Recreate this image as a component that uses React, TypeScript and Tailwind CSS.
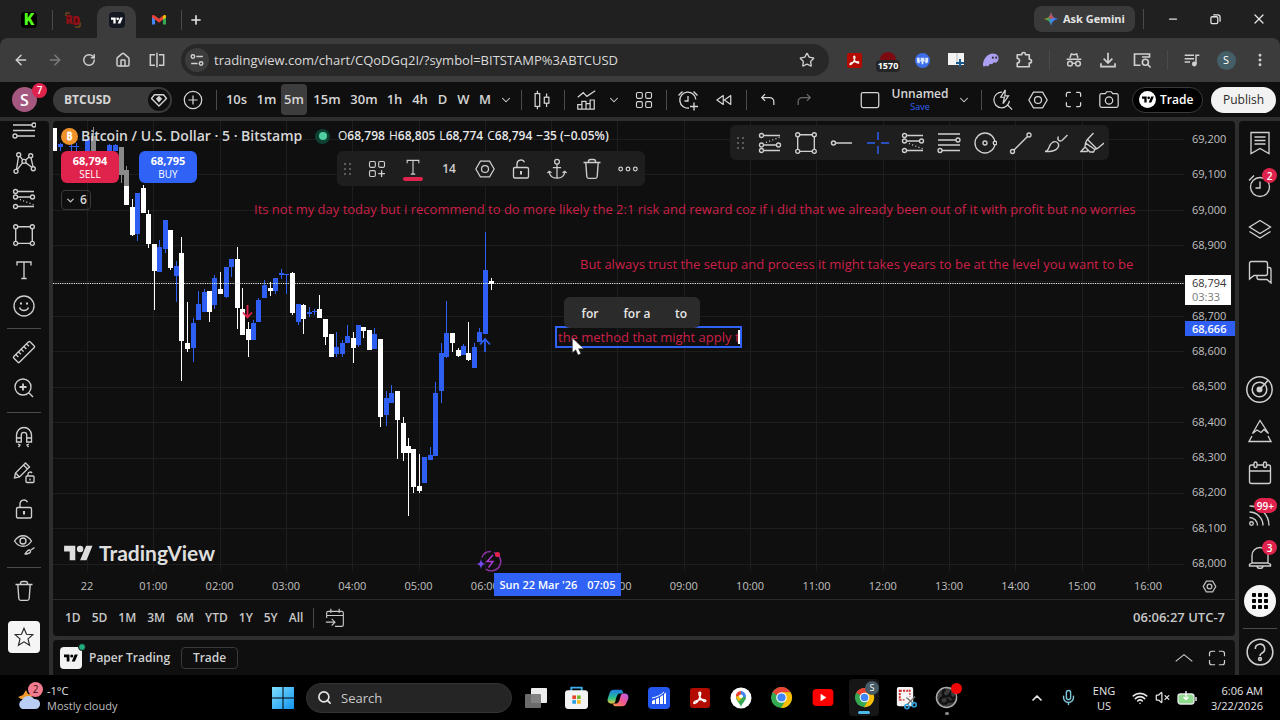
import { useState } from "react";
import type { ReactNode } from "react";
import {
  ArrowLeft, ArrowRight, RotateCw, House, Plus, Star, Minus, X, ChevronDown, ChevronUp,
  EllipsisVertical, Search, Wifi, Mic, Maximize, VolumeX,
} from "lucide-react";

const UI = "font-['Open_Sans','Noto_Sans',sans-serif]";

type IconProps = { children: ReactNode; className?: string; sw?: number };

function Ic({ children, className = "size-6", sw = 1.35 }: IconProps) {
  return (
    <svg viewBox="0 0 24 24" className={`shrink-0 ${className}`} fill="none" stroke="currentColor" strokeWidth={sw} aria-hidden="true">
      {children}
    </svg>
  );
}

function Btn({ label, className = "w-9", children }: { label: string; className?: string; children: ReactNode }) {
  return (
    <button type="button" aria-label={label} className={`flex shrink-0 items-center justify-center ${className}`}>
      {children}
    </button>
  );
}

function Sep({ className = "w-3" }: { className?: string }) {
  return (
    <span className={`flex shrink-0 justify-center ${className}`}>
      <span className="h-5 w-px bg-[#4a4a4a]" />
    </span>
  );
}

const TvMark = ({ className }: { className: string }) => (
  <svg viewBox="0 0 36 20" className={className} fill="currentColor" aria-hidden="true">
    <path d="M14 19H7V8H0V1h14v18zM28 19h-8l7.5-18h8L28 19z" />
    <circle cx="20" cy="5" r="4" />
  </svg>
);

const FibIcon = () => (
  <Ic>
    <circle cx="3.5" cy="4.5" r="2" /><circle cx="3.5" cy="10" r="2" /><circle cx="20.5" cy="10" r="2" /><circle cx="3.5" cy="19.5" r="2" />
    <path d="M5.5 4.5H22M5.5 10h13M5.5 19.5H22" />
    <path d="M8 12.5l14 5.5" strokeDasharray="1 2.4" />
  </Ic>
);
const RectIcon = () => (
  <Ic>
    <circle cx="3.7" cy="3.7" r="2" /><circle cx="20.3" cy="3.7" r="2" /><circle cx="3.7" cy="20.3" r="2" /><circle cx="20.3" cy="20.3" r="2" />
    <path d="M5.7 3.7h12.6M5.7 20.3h12.6M3.7 5.7v12.6M20.3 5.7v12.6" />
  </Ic>
);
const TextIcon = ({ className }: { className?: string }) => (
  <Ic className={className}><path d="M5 7.5V4h14v3.5M12 4v16.5M9.3 20.5h5.4" /></Ic>
);
const LockIcon = () => (
  <Ic>
    <rect x="4.5" y="10.5" width="15" height="10.5" rx="1.5" />
    <path d="M8 10.5V7a4 4 0 0 1 7.6-1.7" /><path d="M12 14v3.5" strokeWidth="2" />
  </Ic>
);
const TrashIcon = () => (
  <Ic><path d="M3.5 5.5h17M5.8 5.5l1 14a2 2 0 0 0 2 1.8h6.4a2 2 0 0 0 2-1.8l1-14M8.5 5.5v-1a2 2 0 0 1 2-2h3a2 2 0 0 1 2 2v1" /></Ic>
);
const HexIcon = ({ className, sw }: { className?: string; sw?: number }) => (
  <Ic className={className} sw={sw}><path d="M7 3.5h10l5 8.5-5 8.5H7L2 12z" /><circle cx="12" cy="12" r="3.8" /></Ic>
);
const Grip = ({ className = "w-5" }: { className?: string }) => (
  <span className={`flex shrink-0 items-center justify-center text-[#5c5c5c] ${className}`}>
    <svg viewBox="0 0 8 12" className="h-3 w-2" fill="currentColor" aria-hidden="true">
      {[0, 5, 10].map((y) => (
        <g key={y}><rect x="0" y={y} width="2" height="2" /><rect x="5" y={y} width="2" height="2" /></g>
      ))}
    </svg>
  </span>
);
const AcrobatIcon = ({ className }: { className: string }) => (
  <svg viewBox="0 0 20 20" className={className} aria-hidden="true">
    <rect width="20" height="20" rx="3" fill="#b30b00" />
    <path d="M9 4.500c1.500-1 2 .5 1.500 2.500C9.500 10.500 7 15 4.500 15.500c-1.500 0-.5-2 2-2.800 3-1 6.500-1.500 8.500-.9 1.800.7.500 2.200-1.200 1.500C11 12 8.500 7.500 9 4.500z" fill="none" stroke="#fff" strokeWidth="1.400" />
  </svg>
);
const ChromeIcon = ({ className }: { className: string }) => (
  <svg viewBox="0 0 24 24" className={className} aria-hidden="true">
    <circle cx="12" cy="12" r="11" fill="#34a853" />
    <path d="M12 12 2.500 6.500A11 11 0 0 1 21.500 6.500L12 7z" fill="#ea4335" />
    <path d="M21.500 6.500A11 11 0 0 1 11.500 23L16.500 14.500 12 6.500z" fill="#fbbc04" />
    <circle cx="12" cy="12" r="5.500" fill="#fff" /><circle cx="12" cy="12" r="4.300" fill="#4285f4" />
  </svg>
);

function BrowserTabs() {
  return (
    <header className="flex h-[38px] items-end bg-[#202020] text-[#e3e3e3]">
      <nav aria-label="Tabs" className="flex h-8 shrink-0 items-center">
        <Btn label="Kick" className="ml-3 w-[34px] pb-1">
          <span className="flex size-4 items-center justify-center rounded-sm bg-black font-['Roboto',sans-serif] text-base leading-4 font-black text-[#53fc18]">K</span>
        </Btn>
        <Sep className="w-3 pb-1" />
        <Btn label="Game" className="w-[30px] pb-1">
          <svg viewBox="0 0 16 16" className="size-4" aria-hidden="true">
            <path d="M1 4V1h4M15 10v5h-5" stroke="#8a5a20" fill="none" />
            <path d="M1.500 3h4.500l1.500 2-.5 2.500L8 12H5.500l-1-3-.5 3h-2.500zM8.500 4H13l2 2v5l-2 2H8.500z" fill="#8d1016" /><path d="M11.500 6.500v4M4 5v2" stroke="#3a0508" strokeWidth="1.500" />
          </svg>
        </Btn>
        <span className="w-[9px]" />
        <button type="button" aria-label="TradingView" className="flex h-8 w-[39px] items-center justify-center rounded-t-[10px] bg-[#3c3c3c] pb-1">
          <span className="flex size-4 items-center justify-center rounded-sm bg-[#131722] text-white"><TvMark className="h-[7px] w-3" /></span>
        </button>
        <Btn label="Gmail" className="w-[46px] pb-1">
          <svg viewBox="0 0 16 12" className="h-3 w-[14px]" aria-hidden="true">
            <path d="M0 2v9h3.500V4z" fill="#4285f4" /><path d="M12.500 4v7H16V2z" fill="#34a853" />
            <path d="M0 2C0 0 2 0 3.500 1L8 4.500 12.500 1v4.500L8 9 3.500 5.500 0 3z" fill="#ea4335" /><path d="M12.500 1C14 0 16 0 16 2v1l-3.500 2.500z" fill="#fbbc04" />
          </svg>
        </Btn>
        <Sep className="-ml-1 w-1.5 pb-1" />
        <Btn label="New tab" className="w-6 pb-1"><Plus className="size-[14px]" strokeWidth={2.8} /></Btn>
      </nav>
      <div className="flex-1" />
      <div className="flex h-[38px] items-center">
        <button type="button" className={`flex h-[26px] w-[101px] items-center justify-center gap-[5px] rounded-lg bg-[#3a3a3a] text-[11px] font-bold ${UI}`}>
          <svg viewBox="0 0 24 24" className="size-[14px]" aria-hidden="true">
            <defs>
              <linearGradient id="gem" x1="0" y1="0" x2="1" y2="0">
                <stop offset="0" stopColor="#f4b400" /><stop offset=".3" stopColor="#34a853" /><stop offset=".55" stopColor="#4285f4" /><stop offset="1" stopColor="#3b7bff" />
              </linearGradient>
            </defs>
            <path d="M12 0c1 7 5 11 12 12-7 1-11 5-12 12C11 17 7 13 0 12 7 11 11 7 12 0z" fill="url(#gem)" />
            <path d="M12 0c.8 5 3 8.500 6 10.300L12 12 6.500 10C10 8 11.300 5 12 0z" fill="#ea4335" opacity=".75" />
          </svg>
          Ask Gemini
        </button>
        <Sep className="w-4" />
        <Btn label="Minimize" className="w-[43px]"><Minus className="size-3" strokeWidth={2.5} /></Btn>
        <Btn label="Restore" className="w-[43px]">
          <Ic className="size-[11px]" sw={2.8}><rect x="2" y="6" width="15" height="15" rx="3" /><path d="M7 2h10a5 5 0 0 1 5 5v10" /></Ic>
        </Btn>
        <Btn label="Close" className="w-[43px]"><X className="size-4" strokeWidth={1.8} /></Btn>
      </div>
    </header>
  );
}

function BrowserBar() {
  const [url, setUrl] = useState("tradingview.com/chart/CQoDGq2I/?symbol=BITSTAMP%3ABTCUSD");
  const b = "h-8 w-[34px]";
  return (
    <div className="bg-[#202020]">
      <div className="flex h-11 items-center rounded-t-lg bg-[#3c3c3c] pr-[3px] pl-1 text-[#d0d0d0]">
        <Btn label="Back" className={b}><ArrowLeft className="size-4" strokeWidth={2.2} /></Btn>
        <Btn label="Forward" className={`${b} text-[#7c7c7c]`}><ArrowRight className="size-4" strokeWidth={2.2} /></Btn>
        <Btn label="Reload" className={b}><RotateCw className="size-[14px]" strokeWidth={2.5} /></Btn>
        <Btn label="Home" className={b}><House className="size-4" strokeWidth={2.2} /></Btn>
        <Btn label="Split view" className={b}>
          <Ic className="size-4" sw={2.2}><path d="M9 4H2v16h7M12 1v22M15 4h7v16h-7" /></Ic>
        </Btn>
        <div className="mr-2 ml-[7px] flex h-8 flex-1 items-center rounded-full bg-[#282828] pr-[5px] pl-1">
          <Btn label="Site information" className="size-6 rounded-full bg-[#3c3c3c]">
            <Ic className="size-[14px]" sw={2.4}><circle cx="5" cy="6" r="3" /><path d="M11 6h11M2 18h11" /><circle cx="19" cy="18" r="3" /></Ic>
          </Btn>
          <label htmlFor="url" className="sr-only">Address</label>
          <input id="url" value={url} onChange={(e) => setUrl(e.target.value)} className={`ml-1 h-6 min-w-0 flex-1 bg-transparent pl-px text-[13px] text-[#dadada] outline-none ${UI}`} />
          <Btn label="Bookmark" className="w-[34px]"><Star className="size-4" strokeWidth={2} /></Btn>
        </div>
        <Btn label="Acrobat" className={b}><AcrobatIcon className="size-[15px]" /></Btn>
        <button type="button" className={`relative flex items-start justify-center pt-1 ${b}`}>
          <span className="mt-1 h-2 w-4 rounded-t-full bg-[#7d0a10]" />
          <span className={`absolute top-4 rounded-sm bg-[#262626] px-0.5 text-[9px] leading-3 font-bold text-white ${UI}`}>1570</span>
        </button>
        <Btn label="Team extension" className={b}>
          <svg viewBox="0 0 16 16" className="size-[15px]" aria-hidden="true"><circle cx="8" cy="8" r="8" fill="#3b6ee8" /><path d="M2 5h3v3h1V5h4v3h1V5h3v4l-1 2h-2V9H9v3H7V9H5v2H3L2 9z" fill="#dbe6ff" /></svg>
        </Btn>
        <Btn label="Panels extension" className={b}>
          <svg viewBox="0 0 16 14" className="h-[14px] w-4" aria-hidden="true"><rect width="16" height="12" fill="#f3f3f3" /><path d="M9 0v12" stroke="#bbb" /><path d="M12 6v8M8 10h8" stroke="#1b5a8c" strokeWidth="2" /></svg>
        </Btn>
        <Btn label="Phantom" className={b}>
          <svg viewBox="0 0 18 16" className="h-4 w-[17px]" aria-hidden="true"><path d="M1 13C1 7 6 1 11.500 1 16 1 18 4 17.500 7c-.5 3-3 5-5 3.500-1 2-3 2.500-4 1.500-1.500 3-4 3.500-4.500 1.500-.5 2-3 2-3-.5z" fill="#ab9ff2" /><circle cx="11.500" cy="5.500" r="1.100" fill="#333" /><circle cx="15" cy="5.500" r="1.100" fill="#333" /></svg>
        </Btn>
        <Btn label="Extensions" className={b}>
          <Ic className="size-[18px]" sw={2.2}><path d="M3 5h6c0-4 5-4 5 0h5v6c4 0 4 5 0 5v5H3v-5c4 0 4-6 0-6z" strokeLinejoin="round" /></Ic>
        </Btn>
        <Sep className="w-4" />
        <Btn label="Incognito" className={b}>
          <Ic className="size-4" sw={2.2}><path d="M6 9l2-6 4 1 4-1 2 6M1 11h22" /><circle cx="6" cy="17.500" r="3.500" /><circle cx="18" cy="17.500" r="3.500" /><path d="M9.500 17h5" /></Ic>
        </Btn>
        <Btn label="Downloads" className={b}><Ic className="size-4" sw={2.6}><path d="M12 1v15M5.500 10l6.500 6.500 6.500-6.500M1.500 17v5h21v-5" /></Ic></Btn>
        <Btn label="Search tabs" className={b}>
          <Ic className="size-[18px]" sw={2.2}><path d="M10 19H2V4h20v5M12 8h10" /><circle cx="16.500" cy="15" r="4" /><path d="M19.500 18l4 4" /></Ic>
        </Btn>
        <Sep className="w-4" />
        <Btn label="Media" className={b}><Ic className="size-4" sw={2.2}><path d="M1 5h14M1 10h14M1 15h8M18 18V5h5" /><circle cx="15.500" cy="18" r="2.500" fill="currentColor" /></Ic></Btn>
        <Btn label="Profile" className={b}><span className={`flex size-[19px] items-center justify-center rounded-full bg-[#455f68] text-[11px] text-white ${UI}`}>S</span></Btn>
        <Btn label="Menu" className={b}><EllipsisVertical className="size-4" strokeWidth={2.4} /></Btn>
      </div>
    </div>
  );
}

const INTERVALS: [string, string][] = [
  ["10s", "w-[31px]"], ["1m", "w-[29px]"], ["5m", "w-[26px] rounded bg-[#3d3d3d]"], ["15m", "w-10"], ["30m", "w-[34px]"],
  ["1h", "w-[27px]"], ["4h", "w-6"], ["D", "w-[21px]"], ["W", "w-[21px]"], ["M", "w-[22px]"],
];

function ChartHeader() {
  return (
    <div className={`flex h-[35px] items-center bg-[#0f0f0f] text-[#d6d6d6] ${UI}`}>
      <button type="button" aria-label="Account, 7 notifications" className="relative ml-3 flex size-[25px] shrink-0 items-center justify-center rounded-full bg-[#a4587f] text-base font-semibold text-white">
        S
        <span className="absolute -top-1 left-5 flex size-[15px] items-center justify-center rounded-full bg-[#e0234c] text-[10px] font-semibold">7</span>
      </button>
      <button type="button" className="ml-4 flex h-[26px] w-[119px] shrink-0 items-center justify-between rounded-full bg-[#3a3a3a] pr-[2px] pl-[11px] text-xs font-bold">
        BTCUSD
        <span className="flex size-[22px] items-center justify-center rounded-full bg-[#0f0f0f]">
          <Ic className="size-[18px]" sw={1.8}><path d="M6 5h12l4 5-10 10L2 10z" strokeLinejoin="round" /><path d="M12 7.500l3 3-3 3.500-3-3.500z" fill="currentColor" /></Ic>
        </span>
      </button>
      <Btn label="Compare" className="w-[42px]"><Ic className="size-[22px]"><circle cx="12" cy="12" r="9.500" /><path d="M12 7v10M7 12h10" /></Ic></Btn>
      <Sep className="w-1" />
      {INTERVALS.map(([t, c], i) => (
        <button key={t} type="button" className={`h-[31px] shrink-0 text-center text-[13px] font-semibold ${i === 0 ? "ml-[3px]" : ""} ${c}`}>{t}</button>
      ))}
      <Btn label="More intervals" className="w-5"><ChevronDown className="size-[14px]" strokeWidth={1.8} /></Btn>
      <Sep className="w-2.5" />
      <Btn label="Chart type" className="w-8">
        <Ic className="size-[22px]"><path d="M7 2v3M7 19v3M17 5v4M17 15.500v4" /><rect x="4.500" y="5" width="5" height="14" /><rect x="14.500" y="9" width="5" height="6.500" /></Ic>
      </Btn>
      <Sep />
      <Btn label="Indicators" className="w-8">
        <Ic className="size-[22px]"><path d="M3 9l6-5 4 4 9-6M3 22v-5h4.500v5M7.500 22v-8.500H12V22M12 16h4.500v6M16.500 22V12H21v10M2.500 22h19" /></Ic>
      </Btn>
      <Btn label="Favourite indicators" className="w-6"><ChevronDown className="size-[14px]" strokeWidth={1.8} /></Btn>
      <Btn label="Templates" className="w-9">
        <Ic className="size-5"><rect x="3" y="3" width="7" height="7" rx="1.500" /><rect x="14" y="3" width="7" height="7" rx="1.500" /><rect x="3" y="14" width="7" height="7" rx="1.500" /><rect x="14" y="14" width="7" height="7" rx="1.500" /></Ic>
      </Btn>
      <Sep className="w-2" />
      <Btn label="Create alert" className="w-9">
        <Ic><path d="M19.800 11.500A8 8 0 1 0 13 20M12 8v5H8.500M2.500 7.500 6.500 3.500M21.500 7.500 17.500 3.500M18 14.500v8M14 18.500h8" /></Ic>
      </Btn>
      <Btn label="Replay" className="w-9"><Ic className="size-[18px]" sw={1.6}><path d="M11 6v12l-8.500-6zM21 6v12l-8.500-6z" strokeLinejoin="round" /></Ic></Btn>
      <Sep className="w-2" />
      <Btn label="Undo" className="w-9"><Ic className="size-5" sw={1.5}><path d="M8.500 5 4.500 9l4 4M4.500 9H14a5 5 0 0 1 5 5v4" /></Ic></Btn>
      <Btn label="Redo" className="w-9 text-[#6a6a6a]"><Ic className="size-5" sw={1.5}><path d="M15.500 5l4 4-4 4M19.500 9H10a5 5 0 0 0-5 5v4" /></Ic></Btn>
      <div className="flex-1" />
      <Btn label="Layout" className="w-8"><Ic className="size-5" sw={1.5}><rect x="1.500" y="3" width="21" height="18" rx="2" /></Ic></Btn>
      <button type="button" className="flex w-[68px] shrink-0 flex-col items-center">
        <span className="text-xs leading-[14px] font-semibold">Unnamed</span>
        <span className="text-[9px] leading-[12px] text-[#2f62f5]">Save</span>
      </button>
      <Btn label="Layouts" className="w-5"><ChevronDown className="size-[14px]" strokeWidth={1.8} /></Btn>
      <Sep className="ml-[3px] w-2" />
      <Btn label="Quick search" className="w-[35px]"><Ic className="size-[22px]"><path d="M11 3.500A8.500 8.500 0 1 0 19 13M17 17.500l5 5M14.500 1 9.500 9h4L12 16l6-8.500h-4z" /></Ic></Btn>
      <Btn label="Settings" className="w-9"><HexIcon className="size-[22px]" /></Btn>
      <Btn label="Fullscreen" className="w-[35px]"><Maximize className="size-[19px]" strokeWidth={1.6} /></Btn>
      <Btn label="Snapshot" className="w-[35px]">
        <Ic className="size-[22px]"><path d="M8 5l1.500-2h5L16 5h4a2 2 0 0 1 2 2v11a2 2 0 0 1-2 2H4a2 2 0 0 1-2-2V7a2 2 0 0 1 2-2z" /><circle cx="12" cy="12.500" r="4" /></Ic>
      </Btn>
      <button type="button" className="ml-1.5 flex h-[26px] w-[71px] shrink-0 items-center gap-1 rounded-full border border-[#3a3a3a] bg-black pl-1.5 text-xs font-semibold text-white">
        <span className="flex size-[17px] items-center justify-center rounded-full bg-white text-black"><TvMark className="h-[7px] w-3" /></span>
        Trade
      </button>
      <button type="button" className="mr-1 ml-2 h-[26px] w-[65px] shrink-0 rounded-full bg-[#f2f2f2] text-xs font-medium text-[#2a2a2a]">Publish</button>
    </div>
  );
}

const Line = ({ className }: { className: string }) => (
  <div className={`flex shrink-0 items-center ${className}`}><span className="h-px w-[34px] bg-[#4a4a4a]" /></div>
);

function DrawingTools() {
  const b = "h-9 w-full";
  return (
    <aside className="flex w-[49px] shrink-0 flex-col items-center rounded-tr bg-[#0f0f0f] pr-px text-[#cfcfcf]">
      <Btn label="Lines" className="h-6 w-full">
        <Ic><circle cx="22" cy="4" r="2" /><circle cx="3" cy="15" r="2" /><path d="M1 4h19M1 9.500h22M5 15h18" /></Ic>
      </Btn>
      <Btn label="Patterns" className={b}>
        <Ic>
          <path d="M4.500 18.300 6.500 5.700M8 5.300l2.800 3.500M13.500 9l3.700-3M19 6.700l2 9M19.800 16.300 13.600 11.600M5.200 18.700l5.500-7" />
          <circle cx="4" cy="20.300" r="2" /><circle cx="6.700" cy="3.700" r="2" /><circle cx="12" cy="10.300" r="2" /><circle cx="18.700" cy="4.700" r="2" /><circle cx="21.300" cy="17.700" r="2" />
        </Ic>
      </Btn>
      <Btn label="Projection" className={b}><FibIcon /></Btn>
      <Btn label="Shapes" className="h-[35px] w-full"><RectIcon /></Btn>
      <Btn label="Text" className={b}><TextIcon /></Btn>
      <Btn label="Icons" className="h-[35px] w-full">
        <Ic><circle cx="12" cy="12" r="10" /><path d="M7.500 13.500c1.500 4 7.500 4 9 0" /><path d="M9 8.500v2M15 8.500v2" strokeWidth="2" /></Ic>
      </Btn>
      <Line className="h-[11px]" />
      <Btn label="Measure" className={b}>
        <Ic><g transform="rotate(-45 12 12)"><rect x="0.500" y="8" width="23" height="8" rx="1" /><path d="M4.500 8v3.500M8.200 8v3.500M12 8v3.500M15.800 8v3.500M19.500 8v3.500" /></g></Ic>
      </Btn>
      <Btn label="Zoom in" className={b}><Ic><circle cx="11" cy="11" r="8" /><path d="M17 17l4 4" /><path d="M11 7.500v7M7.500 11h7" strokeWidth="1.800" /></Ic></Btn>
      <Line className="h-[13px]" />
      <Btn label="Magnet" className={b}>
        <Ic><path d="M4.500 17v-7a7.500 7.500 0 0 1 15 0v7h-4.800v-7a2.700 2.700 0 0 0-5.400 0v7zM4.500 13h4.800M14.700 13h4.800M6 19l2 1-1.500 2M17 19l-2 1 1.500 2" /></Ic>
      </Btn>
      <Btn label="Stay in drawing mode" className={b}>
        <Ic><path d="M2.500 17l1-5L13.500 2l4 4L7.500 16zM11.500 4l4 4M3.500 12l4 4" /><rect x="14" y="15" width="8" height="6.500" rx="1" /><path d="M16 15v-2a2.200 2.200 0 0 1 4-1M18 17.500v2" /></Ic>
      </Btn>
      <Btn label="Lock drawings" className="h-[35px] w-full"><LockIcon /></Btn>
      <Btn label="Hide drawings" className={b}>
        <Ic><path d="M2.500 9C7 2 15 2 19.500 9c-4.500 7-12.500 7-17 0z" /><circle cx="11" cy="9" r="3" /><path d="M12.500 22c2 0 2-4 4.500-4 1.500 0 2 1.500 1 2.500-1 1.300-3 1.500-5.500 1.500zM19 18l3.500-2.500" /></Ic>
      </Btn>
      <Line className="h-[11px]" />
      <Btn label="Remove drawings" className={b}><TrashIcon /></Btn>
      <Btn label="Show favourites" className="mt-3 size-8 rounded bg-[#f5f5f5] text-[#222]">
        <Ic className="size-5"><path d="M12 1.500l3 7.200 7.700.6-5.900 5 1.900 7.600L12 17.800 5.300 21.900l1.900-7.600-5.900-5 7.700-.6z" /></Ic>
      </Btn>
    </aside>
  );
}

/* x centre, high, body top, body bottom, low, colour (b up, w down, g dimmed) */
const CANDLES: [number, number, number, number, number, "b" | "w" | "g"][] = [
  [54, 128, 128, 151, 151, "w"], [60, 143, 144, 147, 151, "b"], [71, 144, 146, 147, 151, "b"], [76, 143, 146, 147, 151, "b"],
  [87, 136, 139, 151, 151, "b"], [93, 127, 136, 151, 151, "g"], [109, 144, 145, 151, 151, "b"], [115, 144, 145, 151, 151, "b"],
  [121, 147, 147, 175, 183, "g"], [126, 166, 170, 186, 186, "g"], [126, 186, 186, 205, 205, "w"], [132, 199, 207, 235, 236, "w"],
  [137, 193, 193, 234, 241, "b"], [143, 185, 188, 213, 213, "w"], [148, 210, 214, 244, 248, "w"], [154, 244, 244, 271, 310, "w"],
  [159, 240, 247, 272, 272, "b"], [165, 220, 220, 249, 253, "b"], [170, 230, 230, 268, 270, "w"], [176, 261, 266, 276, 302, "b"],
  [181, 237, 253, 341, 381, "w"], [187, 302, 343, 349, 352, "w"], [193, 318, 323, 348, 362, "b"], [198, 291, 304, 320, 320, "b"],
  [204, 289, 292, 312, 312, "b"], [209, 291, 291, 312, 322, "w"], [214, 275, 278, 305, 309, "b"], [220, 272, 289, 294, 294, "w"],
  [226, 267, 267, 297, 298, "b"], [231, 259, 259, 267, 277, "b"], [237, 247, 259, 308, 329, "w"], [242, 288, 309, 335, 335, "w"],
  [248, 322, 329, 340, 357, "w"], [253, 320, 323, 340, 340, "b"], [258, 298, 300, 322, 322, "b"], [264, 280, 285, 298, 298, "b"],
  [270, 282, 288, 291, 296, "w"], [275, 278, 278, 291, 294, "b"], [281, 269, 273, 275, 279, "b"], [286, 274, 274, 275, 294, "b"],
  [292, 272, 273, 313, 315, "w"], [298, 304, 304, 322, 325, "b"], [303, 304, 305, 319, 334, "w"], [309, 307, 312, 314, 317, "b"],
  [314, 309, 311, 312, 315, "b"], [319, 295, 309, 318, 318, "w"], [325, 319, 319, 337, 345, "w"], [331, 334, 334, 357, 357, "w"],
  [336, 332, 347, 354, 357, "b"], [342, 340, 343, 354, 357, "b"], [347, 325, 336, 343, 343, "b"], [353, 332, 338, 348, 363, "w"],
  [358, 325, 325, 345, 347, "b"], [363, 327, 327, 331, 338, "w"], [369, 330, 330, 350, 350, "w"], [374, 328, 334, 349, 349, "b"],
  [380, 339, 339, 417, 427, "w"], [386, 391, 398, 415, 426, "b"], [391, 385, 393, 403, 403, "b"], [397, 391, 391, 420, 459, "w"],
  [403, 417, 423, 453, 461, "w"], [408, 438, 446, 453, 516, "w"], [413, 449, 449, 487, 493, "w"], [419, 454, 486, 491, 493, "w"],
  [424, 457, 457, 483, 483, "b"], [430, 447, 455, 460, 460, "b"], [435, 382, 393, 456, 456, "b"], [441, 343, 353, 391, 403, "b"],
  [446, 301, 333, 357, 358, "b"], [452, 333, 333, 343, 352, "w"], [458, 348, 350, 356, 357, "w"], [463, 344, 346, 355, 355, "b"],
  [468, 322, 353, 360, 361, "w"], [474, 343, 347, 368, 368, "b"], [479, 328, 332, 342, 342, "b"], [485, 232, 270, 334, 334, "b"],
  [491, 278, 281, 284, 290, "w"],
];
const FILL = { b: "#2f5ff2", w: "#ffffff", g: "#8a8a8a" };

const PRICES = Array.from({ length: 13 }, (_, i) => (69200 - i * 100).toLocaleString("en-US"));
const TIMES = ["22", ...Array.from({ length: 16 }, (_, i) => `${String(i + 1).padStart(2, "0")}:00`)];

function CandlePlot() {
  return (
    <svg viewBox="53 121 1131 454" preserveAspectRatio="xMinYMin slice" className="absolute inset-0 size-full" role="img" aria-label="BTCUSD five minute candles">
      <g fill="#1e1e1e">
        {PRICES.map((p, i) => <rect key={p} x="53" y={Math.round(139 + i * 35.4)} width="1131" height="1" />)}
        {TIMES.map((t, i) => <rect key={t} x={Math.round(87 + i * 66.3)} y="121" width="1" height="450" />)}
      </g>
      {CANDLES.map(([x, hi, top, bottom, lo, c], i) => (
        <g key={i} fill={FILL[c]}>
          <rect x={x} y={hi} width="1" height={Math.max(lo - hi, 1)} />
          <rect x={x - 2} y={top} width="5" height={Math.max(bottom - top, 1)} />
        </g>
      ))}
      <path d="M53 283.500H1184" stroke="#e8e8e8" strokeDasharray="1.300 1" />
      <path d="M247.500 305v12M243 312.500l4.500 5 4.500-5" fill="none" stroke="#e0234c" strokeWidth="1.800" />
      <path d="M485 352v-13M480 344.500l5-5.500 5 5.500" fill="none" stroke="#2f5ff2" strokeWidth="1.800" />
      <g fill="none" stroke="#8e33a8" strokeWidth="1.400">
        <path d="M494 552.600a9.300 9.300 0 1 1-8 16.500M481.800 557.500a9.300 9.300 0 0 1 9-6" />
        <path d="M493 555l-6 6.500h6l-4.500 6" stroke="#b03bd0" />
      </g>
      <circle cx="497.500" cy="554.500" r="2.600" fill="#e0234c" />
      <path d="M481 559c.5 3 1.500 4.500 4.500 5-3 .5-4 2-4.500 5-.5-3-1.500-4.500-4.500-5 3-.5 4-2 4.500-5z" fill="#7548f0" />
    </svg>
  );
}

function FavouritesBar() {
  const b = "h-full w-9";
  return (
    <div className="absolute top-1 left-[677px] flex h-[35px] items-center overflow-hidden rounded-md bg-[#1e1e1e] text-[#cfcfcf]">
      <Grip className="w-[22px]" />
      <Btn label="Long position" className={b}>
        <Ic><circle cx="3.500" cy="4.500" r="2" /><circle cx="3.500" cy="14" r="2" /><circle cx="20.500" cy="14" r="2" /><circle cx="3.500" cy="19.500" r="2" /><path d="M5.500 4.500H22M5.500 14h13M5.500 19.500H22" /><path d="M8 11.500l14-5.500" strokeDasharray="1 2.400" /></Ic>
      </Btn>
      <Btn label="Rectangle" className={b}><RectIcon /></Btn>
      <Btn label="Horizontal ray" className={b}><Ic sw={1.5}><circle cx="3.500" cy="12" r="2" /><path d="M5.500 12H22" /></Ic></Btn>
      <Btn label="Cross line" className="h-full w-[35px] text-[#2f5ff2]"><Ic sw={1.5}><path d="M12 1v8M12 15v8M1 12h8M15 12h8" /></Ic></Btn>
      <Btn label="Short position" className={b}><FibIcon /></Btn>
      <Btn label="Retracement" className={b}><Ic><circle cx="21" cy="9" r="2" /><circle cx="3" cy="19.500" r="2" /><path d="M1 3h22M1 9h18M1 14h22M5 19.500h18" /></Ic></Btn>
      <Btn label="Circle" className={b}><Ic><circle cx="12" cy="12" r="10" /><circle cx="12" cy="12" r="2" /><circle cx="22" cy="12" r="1.800" fill="#1e1e1e" /></Ic></Btn>
      <Btn label="Trend line" className="h-full w-[35px]"><Ic><circle cx="3.500" cy="20.500" r="2" /><circle cx="20" cy="4" r="2" /><path d="M5 19 18.500 5.500" /></Ic></Btn>
      <Btn label="Brush" className={b}><Ic><path d="M1 20.500c5-.5 3-7 8-9.500 4-1.500 7 2 5 5.500-2 4-8 4-13 4zM14.500 5.500c-2 3 1 5.500 3.500 4L23.500 4" /></Ic></Btn>
      <Btn label="Highlighter" className="h-full w-[35px]"><Ic><path d="M13.500 2 7 9l-1.500 3 9.500 6.500 2.500-1L24 12M8 9l9 9M5.500 12.500 5 16l5 5h3.500l1.500-3M5 16l-4 4.500h6l1-1.500" /></Ic></Btn>
    </div>
  );
}

function EditBar() {
  const b = "h-full w-9";
  return (
    <div className="absolute top-[30px] left-[284px] flex h-[35px] items-center overflow-hidden rounded-md bg-[#1e1e1e] text-[#cfcfcf]">
      <Grip className="w-[22px]" />
      <Btn label="Template" className={b}>
        <Ic className="size-5"><rect x="3" y="3" width="7" height="7" rx="1.500" /><rect x="14" y="3" width="7" height="7" rx="1.500" /><rect x="3" y="14" width="7" height="7" rx="1.500" /><path d="M17.500 13.500v8M13.500 17.500h8" strokeWidth="1.600" /></Ic>
      </Btn>
      <Btn label="Text colour" className={`${b} flex-col`}><TextIcon className="size-[20px]" /><span className="h-1 w-5 rounded-sm bg-[#e0234c]" /></Btn>
      <button type="button" className={`${b} text-xs font-semibold`}>14</button>
      <Btn label="Settings" className={b}><HexIcon className="size-[22px]" /></Btn>
      <Btn label="Lock" className={b}><LockIcon /></Btn>
      <Btn label="Anchor" className="h-full w-[35px]"><Ic className="size-[22px]"><circle cx="12" cy="4" r="2.600" /><path d="M12 6.600V22M7.500 10.500h9M3.500 15c.5 4.500 4 7 8.500 7s8-2.500 8.500-7M1.500 16.500l2-2 2.500 1.500M22.500 16.500l-2-2-2.500 1.500" /></Ic></Btn>
      <Btn label="Remove" className={b}><TrashIcon /></Btn>
      <Btn label="More" className="h-full w-[35px]"><Ic className="size-[22px]"><circle cx="4" cy="12" r="2" /><circle cx="12" cy="12" r="2" /><circle cx="20" cy="12" r="2" /></Ic></Btn>
    </div>
  );
}

function Plot() {
  const [note, setNote] = useState("the method that might apply t");
  return (
    <div className="relative min-w-0 flex-1 overflow-hidden">
      <CandlePlot />
      <div className="relative flex flex-col items-start pt-1.5 pl-2">
        <div className="flex h-[18px] items-center whitespace-nowrap text-[#d8d8d8]">
          <span className="flex size-[17px] items-center justify-center rounded-full bg-[#f0922b] text-[11px] font-bold text-white">₿</span>
          <h1 className="ml-[3px] w-[228px] text-sm font-semibold">Bitcoin / U.S. Dollar · 5 · Bitstamp</h1>
          <span className="ml-[6px] flex size-[15px] items-center justify-center rounded-full bg-[#0e4034]"><span className="size-2 rounded-full bg-[#4fd0a0]" /></span>
          <p className="ml-2 flex gap-1 text-xs font-semibold text-[#e8e8e8]">
            <span><span className="font-normal">O</span>68,798</span><span><span className="font-normal">H</span>68,805</span><span><span className="font-normal">L</span>68,774</span><span><span className="font-normal">C</span>68,794</span><span>−35 (−0.05%)</span>
          </p>
        </div>
        <div className="mt-1.5 flex gap-5">
          <button type="button" className="flex h-8 w-[58px] flex-col items-center justify-center rounded-md bg-[#e0234c] text-white">
            <span className="text-[11px] leading-[14px] font-bold">68,794</span><span className="text-[10px] leading-3 font-medium">SELL</span>
          </button>
          <button type="button" className="flex h-8 w-[58px] flex-col items-center justify-center rounded-md bg-[#2f62f5] text-white">
            <span className="text-[11px] leading-[14px] font-bold">68,795</span><span className="text-[10px] leading-3 font-medium">BUY</span>
          </button>
        </div>
        <button type="button" className="mt-[7px] flex h-5 w-[30px] items-center justify-center gap-1 rounded border border-[#3a3a3a] text-xs font-semibold text-[#d6d6d6]">
          <ChevronDown className="size-[11px]" strokeWidth={2.4} />6
        </button>
      </div>
      <FavouritesBar />
      <EditBar />
      <p className="absolute top-[78px] left-[201px] text-[13px] leading-5 whitespace-nowrap text-[#cc2049]">Its not my day today but i recommend to do more likely the 2:1 risk and reward coz if i did that we already been out of it with profit but no worries</p>
      <p className="absolute top-[133px] left-[527px] text-[13px] leading-5 whitespace-nowrap text-[#cc2049]">But always trust the setup and process it might takes years to be at the level you want to be</p>
      <div className="absolute top-[205px] left-[502px] flex h-[22px] w-[187px] items-center border-2 border-[#2f62f5]">
        <label htmlFor="note" className="sr-only">Note text</label>
        <input id="note" value={note} onChange={(e) => setNote(e.target.value)} className="h-full w-full bg-transparent pl-px text-[13px] leading-[18px] text-[#cc2049] outline-none" />
        <span className="absolute right-0 h-[14px] w-0.5 bg-white" />
      </div>
      <div className="absolute top-[176px] left-[511px] flex h-[31px] w-[136px] items-center rounded-md bg-[#2b2b2b] pt-0.5 text-xs font-semibold text-[#e6e6e6]">
        <button type="button" className="w-[52px]">for</button><button type="button" className="w-[42px]">for a</button><button type="button" className="flex-1 pl-1">to</button>
      </div>
      <svg viewBox="0 0 10 16" className="absolute top-[217px] left-[519px] h-[18px] w-[12px]" aria-hidden="true"><path d="M0 0v13l3-2.500L5 15l2.500-1-2-4.500H10z" fill="#fff" stroke="#222" strokeWidth=".4" /></svg>
      <div className="absolute bottom-3 left-[11px] flex items-center gap-1.5 text-[#dedede]">
        <TvMark className="h-4 w-[29px]" />
        <span className="font-['Lato',sans-serif] text-[21px] leading-5 font-bold">TradingView</span>
      </div>
    </div>
  );
}

function PriceAxis() {
  return (
    <div className="relative flex w-[51px] shrink-0 flex-col justify-between pt-2 pb-[2px] text-[11px] font-medium text-[#c0c0c0]">
      {PRICES.map((p) => <span key={p} className={`pl-2 leading-5 ${p === "68,800" ? "invisible" : ""}`}>{p}</span>)}
      <div className="absolute top-[154px] left-px h-[30px] w-[46px] bg-white pt-px pl-[7px] leading-[14px] text-[#333]">
        <div>68,794</div><div className="text-[#777]">03:33</div>
      </div>
      <div className="absolute top-[200px] left-px h-[15px] w-[50px] bg-[#2f5ff2] pl-[7px] leading-[15px] font-semibold text-white">68,666</div>
    </div>
  );
}

function ChartPanel() {
  return (
    <section className="flex flex-1 flex-col overflow-hidden rounded bg-[#0f0f0f]">
      <div className="flex min-h-[454px] flex-1"><Plot /><PriceAxis /></div>
      <div className="relative flex h-[25px] shrink-0 items-center border-b border-[#2b2b2b] pb-0.5 text-[11px] font-medium text-[#c0c0c0]">
        <div className="flex flex-1 justify-between pr-9 pl-[34px]">
          {TIMES.map((t) => <span key={t} className="flex w-0 justify-center">{t}</span>)}
        </div>
        <Btn label="Axis settings" className="w-[51px]"><HexIcon className="size-[15px]" sw={2} /></Btn>
        <div className="absolute -top-0.5 left-[441px] flex h-[23px] w-[127px] items-center justify-center gap-[10px] bg-[#2f62f5] pt-0.5 text-[11px] font-semibold text-white"><span>Sun 22 Mar '26</span><span>07:05</span></div>
      </div>
      <div className="flex h-9 shrink-0 items-center pr-[10px] pl-3 text-xs font-semibold text-[#c8c8c8]">
        <div className="flex gap-[11px]">
          {["1D", "5D", "1M", "3M", "6M", "YTD", "1Y", "5Y", "All"].map((r) => <button key={r} type="button">{r}</button>)}
        </div>
        <Sep className="ml-1.5 w-2" />
        <Btn label="Go to date" className="w-9"><Ic className="size-5"><path d="M2 12V6a2 2 0 0 1 2-2h16a2 2 0 0 1 2 2v14a2 2 0 0 1-2 2h-8M2 9h20M7 1v5M17 1v5M1 17h11M8 13l4 4-4 4" /></Ic></Btn>
        <button type="button" className="ml-auto text-[13px]">06:06:27 UTC-7</button>
      </div>
    </section>
  );
}

function TradingPanel() {
  return (
    <section className="flex h-[35px] shrink-0 items-center rounded-t bg-[#0f0f0f] pr-2 pl-[7px] text-[#d0d0d0]">
      <span className="relative flex size-[22px] items-center justify-center rounded bg-[#f2f2f2] text-black">
        <TvMark className="h-2 w-[14px]" />
        <span className="absolute -top-1 -right-1 size-2 rounded-full border border-[#0f0f0f] bg-[#22ab7f]" />
      </span>
      <h2 className="ml-[7px] text-xs font-semibold">Paper Trading</h2>
      <button type="button" className="ml-[11px] h-[22px] w-[57px] rounded border border-[#3a3a3a] text-xs font-semibold">Trade</button>
      <div className="flex-1" />
      <Btn label="Open panel" className="mr-[11px] w-6"><Ic className="size-5"><path d="M2 16l10-8 10 8" /></Ic></Btn>
      <Btn label="Maximize panel" className="w-5"><Ic className="size-[18px]" sw={1.6}><path d="M2 9.500V6a3 3 0 0 1 3-3h4.500M14.500 3H19a3 3 0 0 1 3 3v3.500M22 14.500V18a3 3 0 0 1-3 3h-4.500M9.500 21H5a3 3 0 0 1-3-3v-3.500" /></Ic></Btn>
    </section>
  );
}

const Badge = ({ children }: { children: ReactNode }) => (
  <span className="absolute top-1 right-[3px] flex h-[15px] min-w-[15px] items-center justify-center rounded-full bg-[#e0234c] px-[3px] text-[10px] leading-none font-semibold text-white">{children}</span>
);

function RightRail() {
  const b = "relative h-[43px] w-full";
  const c = "relative h-[42px] w-full";
  return (
    <aside className="flex w-[41px] shrink-0 flex-col items-center rounded-tl bg-[#0f0f0f] pt-px text-[#cfcfcf]">
      <Btn label="Watchlist" className={c}><Ic><path d="M3 1.500h18v21l-9-5-9 5zM6.500 6h11M6.500 9.500h11M6.500 13h11" /></Ic></Btn>
      <Btn label="Alerts" className={b}><Ic><circle cx="12" cy="13" r="9.500" /><path d="M12 7.500V14H7.500M1 6.500 6 1.500" /></Ic><Badge>2</Badge></Btn>
      <Btn label="Object tree" className={b}><Ic><path d="M12 3.500 1.500 10 12 16.500 22.500 10zM1.500 14.500 12 21l10.500-6.500" /></Ic></Btn>
      <Btn label="Chats" className={b}><Ic><path d="M3.500 1.500h14a2 2 0 0 1 2 2v10a2 2 0 0 1-2 2H6l-4.500 3.500V3.500a2 2 0 0 1 2-2zM19.500 7.500h1.500a2 2 0 0 1 2 2v13.500l-4-3.500h-8a2 2 0 0 1-2-2v-2" /></Ic></Btn>
      <div className="flex-1" />
      <Btn label="Screeners" className={c}><Ic className="size-[27px]"><circle cx="12" cy="12" r="11.300" /><circle cx="12" cy="12" r="6.500" /><circle cx="12" cy="12" r="2" fill="currentColor" /><path d="M13 11l6.500-7" /></Ic></Btn>
      <Btn label="Pine" className={c}><Ic><path d="M4.500 14.500 12 1.500l8.500 13-4.500-4-3 3-4-2.500zM4 17l-3 5.500h22L20 17" /></Ic></Btn>
      <Btn label="Calendar" className={c}><Ic><path d="M9 4h6.500M6 4H3.500a2 2 0 0 0-2 2v14.500a2 2 0 0 0 2 2h17a2 2 0 0 0 2-2V6a2 2 0 0 0-2-2H19M1.500 10h21" /><rect x="6" y="1" width="3" height="5.500" rx="1.500" /><rect x="15.500" y="1" width="3" height="5.500" rx="1.500" /></Ic></Btn>
      <Btn label="News" className={c}><Ic><circle cx="3.500" cy="20.500" r="1.800" /><path d="M1.500 14.500a8 8 0 0 1 8 8M1.500 9a13.500 13.500 0 0 1 13.500 13.500M1.500 3A19.500 19.500 0 0 1 21 22.500" /></Ic><Badge>99+</Badge></Btn>
      <Btn label="Notifications" className={c}><Ic><path d="M4 18v-7.500a8 8 0 0 1 16 0V18M4 18h16l2.500 1.500v1.500h-21v-1.500zM9 21.500c.5 2.500 5.500 2.500 6 0" /></Ic><Badge>3</Badge></Btn>
      <Btn label="Products" className="my-[7px] size-8 rounded-full bg-[#f5f5f5] text-black">
        <svg viewBox="0 0 16 16" className="size-4" fill="currentColor" aria-hidden="true">
          {[0, 6, 12].map((y) => [0, 6, 12].map((x) => <rect key={`${x}-${y}`} x={x} y={y} width="4" height="4" rx=".8" />))}
        </svg>
      </Btn>
      <Line className="h-2" />
      <Btn label="Help" className="mb-[3px] h-10 w-full"><Ic className="size-[28px]"><circle cx="12" cy="12" r="11" /><path d="M8 9.500a4 4 0 1 1 5.500 3.500c-1 .5-1.500 1-1.500 2.500" /><circle cx="12" cy="18" r="1.200" /></Ic></Btn>
    </aside>
  );
}

function Taskbar() {
  const t = "h-full w-[41px]";
  return (
    <footer className={`flex h-[45px] shrink-0 items-center bg-black text-[#e6e6e6] ${UI}`}>
      <button type="button" className="flex h-full w-[263px] shrink-0 items-center pl-[17px] text-left">
        <span className="relative size-[26px]">
          <svg viewBox="0 0 26 26" className="size-[26px]" aria-hidden="true">
            <path d="M9 5l2 4 5 1-4 4H4l-3-2 5-2z" fill="#f39a2c" />
            <path d="M5 24a5 5 0 0 1 0-9c2-5 10-5 12-1 8-1 8 10 1 10z" fill="#b9cdf5" />
          </svg>
          <span className="absolute -top-[3px] left-[11px] flex size-[15px] items-center justify-center rounded-full bg-[#f27b8f] text-[10px] text-[#3b0d16]">2</span>
        </span>
        <span className="ml-1 text-[11px] leading-[15px]"><span className="block">-1°C</span><span className="block text-[#bdbdbd]">Mostly cloudy</span></span>
      </button>
      <Btn label="Start" className="h-full w-10">
        <svg viewBox="0 0 22 22" className="size-[22px]" aria-hidden="true"><defs><linearGradient id="win" x1="0" y1="0" x2="1" y2="1"><stop offset="0" stopColor="#7fe0ff" /><stop offset="1" stopColor="#1193ee" /></linearGradient></defs><path d="M0 0h10.500v10.500H0zM11.500 0H22v10.500H11.500zM0 11.500h10.500V22H0zM11.500 11.500H22V22H11.500z" fill="url(#win)" /></svg>
      </Btn>
      <div className="mx-[3px] flex h-[30px] w-[206px] shrink-0 items-center rounded-full border border-[#333] bg-[#252525] pl-[10px]">
        <Search className="size-[15px] shrink-0" strokeWidth={2.6} />
        <label htmlFor="task-search" className="sr-only">Search</label>
        <input id="task-search" placeholder="Search" className="ml-2 h-6 w-32 bg-transparent pl-px text-[13px] outline-none placeholder:text-[#c9c9c9]" />
      </div>
      <Btn label="Task view" className={t}><svg viewBox="0 0 24 22" className="h-[22px] w-6" aria-hidden="true"><rect x="7" y="1" width="16" height="15" rx="1" fill="#ececec" /><rect x="1" y="7" width="16" height="14" rx="1" fill="#777" opacity=".9" /></svg></Btn>
      <Btn label="Microsoft Store" className={t}><svg viewBox="0 0 22 22" className="size-[23px]" aria-hidden="true"><path d="M6 5V1.500h10V5" fill="none" stroke="#3bb0ea" strokeWidth="1.800" /><rect y="4" width="22" height="18" rx="3" fill="#f3f3f3" /><path d="M7 9h3.500v3.500H7z" fill="#e8442c" /><path d="M11.500 9H15v3.500h-3.500z" fill="#73b82c" /><path d="M7 13.500h3.500V17H7z" fill="#2a9ce8" /><path d="M11.500 13.500H15V17h-3.500z" fill="#f6b61e" /></svg></Btn>
      <Btn label="Copilot" className={t}>
        <svg viewBox="0 0 24 24" className="size-[22px]" aria-hidden="true"><defs><linearGradient id="cp1" x1="0" y1="0" x2="0" y2="1"><stop offset="0" stopColor="#1f7ae8" /><stop offset=".6" stopColor="#27c08c" /><stop offset="1" stopColor="#e7c83a" /></linearGradient><linearGradient id="cp2" x1="1" y1="0" x2="0" y2="1"><stop offset="0" stopColor="#b45df0" /><stop offset=".5" stopColor="#f0568f" /><stop offset="1" stopColor="#f79a3b" /></linearGradient></defs><path d="M7 3h8c2 0 2 2 3 4h-4c-2 0-3 2-4 5l-1 4c-1 2-2 2-4 2-4 0-5-3-4-6l2-6c1-2 2-3 4-3z" fill="url(#cp1)" /><path d="M17 21H9c-2 0-2-2-3-3h4c2 0 3-2 4-5l1-4c1-2 2-2 4-2 4 0 5 3 4 6l-2 5c-1 2-2 3-4 3z" fill="url(#cp2)" /></svg>
      </Btn>
      <Btn label="Analytics" className={t}><svg viewBox="0 0 22 22" className="size-[22px]" aria-hidden="true"><rect width="22" height="22" rx="4" fill="#2357ee" /><path d="M4 17v-3l3-1.500V17zM8 17v-5l3-1.500V17zM12 17v-7l3-2v9zM16 17V7l2-1.500V17z" fill="#fff" /><path d="M4 11c5-1 9-3 12-6" stroke="#fff" fill="none" /></svg></Btn>
      <Btn label="Acrobat" className={t}><AcrobatIcon className="size-5" /></Btn>
      <Btn label="Maps" className={t}><svg viewBox="0 0 22 22" className="size-[22px]" aria-hidden="true"><circle cx="11" cy="11" r="10.500" fill="#fff" /><path d="M11 20c-1-4-5-6-5-10h10c0 4-4 6-5 10z" fill="#34a853" /><path d="M6 10a5 5 0 0 1 5-6v5z" fill="#ea4335" /><path d="M11 4a5.500 5.500 0 0 1 5 6h-5z" fill="#4285f4" /><path d="M6 10l4-2 2 3-3.500 3.500z" fill="#fbbc04" /><circle cx="11" cy="9.300" r="1.900" fill="#fff" /></svg></Btn>
      <Btn label="Chrome" className={t}><ChromeIcon className="size-[23px]" /></Btn>
      <Btn label="YouTube" className={t}><svg viewBox="0 0 22 18" className="h-[17px] w-[22px]" aria-hidden="true"><rect width="22" height="18" rx="4" fill="#f00" /><path d="M8.500 5v8l6-4z" fill="#fff" /></svg></Btn>
      <button type="button" aria-label="Chrome, profile S" className="relative mx-1.5 flex h-[37px] w-[30px] shrink-0 items-center justify-center rounded bg-[#161616]">
        <ChromeIcon className="size-[21px]" />
        <span className="absolute top-[2px] right-0 flex size-[14px] items-center justify-center rounded-full bg-[#455a64] text-[9px] text-white">S</span>
        <span className="absolute bottom-0.5 h-[3px] w-3 rounded-full bg-[#4cb8ea]" />
      </button>
      <Btn label="Snipping Tool" className={t}><svg viewBox="0 0 24 26" className="h-[25px] w-[23px]" aria-hidden="true"><rect x="3" y="2" width="17" height="20" rx="2" fill="#f5f5f5" /><path d="M6 6h11M6 5v11" fill="none" stroke="#d32f2f" strokeWidth="2" strokeDasharray="2.200 1.200" /><path d="M6 15.500h5M16.500 5v7" fill="none" stroke="#d32f2f" strokeWidth="1.500" strokeDasharray="2 1.200" /><path d="M14 20l8-8M21 20l-8-7" stroke="#777" strokeWidth="1.500" /><circle cx="13.500" cy="22.500" r="2.200" fill="none" stroke="#2ba0dd" strokeWidth="1.700" /><circle cx="21" cy="20.500" r="2.200" fill="none" stroke="#2ba0dd" strokeWidth="1.700" /></svg></Btn>
      <button type="button" aria-label="OBS Studio, recording" className={`relative flex shrink-0 items-center justify-center ${t}`}>
        <svg viewBox="0 0 24 24" className="size-[23px]" aria-hidden="true"><circle cx="12" cy="12" r="10.500" fill="#3a3a3a" stroke="#aaa" strokeWidth="1.500" /><path d="M11 3.500c-4 1.500-4 7 .5 7.500 2 .3 3-1 4-2.500 0 3 3.500 5 4.500 4-1 6-7 4-7 .5 1.500 3-1 6-4.500 5.500C3 16 6 10 10 12" fill="none" stroke="#111" strokeWidth="2.600" /></svg>
        <span className="absolute top-2 right-[5px] size-[11px] rounded-full bg-[#f30808]" />
        <span className="absolute bottom-[5px] h-[3px] w-1 rounded-full bg-[#888]" />
      </button>
      <div className="flex-1" />
      <Btn label="Hidden icons" className="w-[30px]"><ChevronUp className="size-4" strokeWidth={2.6} /></Btn>
      <Btn label="Microphone" className="w-8 text-[#7fc6da]"><Mic className="size-[17px]" strokeWidth={2} /></Btn>
      <button type="button" className="w-[40px] shrink-0 text-center text-[11px] leading-[15px]">ENG<br />US</button>
      <button type="button" aria-label="Network, sound and battery" className="flex shrink-0 items-center gap-[7px] pl-2">
        <Wifi className="size-4" strokeWidth={2.4} />
        <VolumeX className="size-[15px]" strokeWidth={2} />
        <svg viewBox="0 0 20 14" className="h-[14px] w-5" aria-hidden="true"><rect x="1" y="3" width="16" height="10" rx="2.500" fill="#8fdc8f" stroke="#e8e8e8" strokeWidth="1.300" /><path d="M19 6v4" stroke="#e8e8e8" strokeWidth="1.500" /><path d="M9 0v8M6.500 6 9 8.500 11.500 6" stroke="#fff" strokeWidth="1.300" fill="none" /></svg>
      </button>
      <button type="button" className="mr-[17px] w-[66px] shrink-0 text-right text-[11px] leading-[15px]">6:06 AM<br />3/22/2026</button>
    </footer>
  );
}

export default function App() {
  return (
    <div className={`flex min-h-screen flex-col overflow-hidden bg-[#2e2e2e] ${UI}`}>
      <BrowserTabs />
      <BrowserBar />
      <ChartHeader />
      <main className="mt-1 flex flex-1 gap-1">
        <DrawingTools />
        <div className="flex min-w-0 flex-1 flex-col gap-1">
          <ChartPanel />
          <TradingPanel />
        </div>
        <RightRail />
      </main>
      <Taskbar />
    </div>
  );
}
